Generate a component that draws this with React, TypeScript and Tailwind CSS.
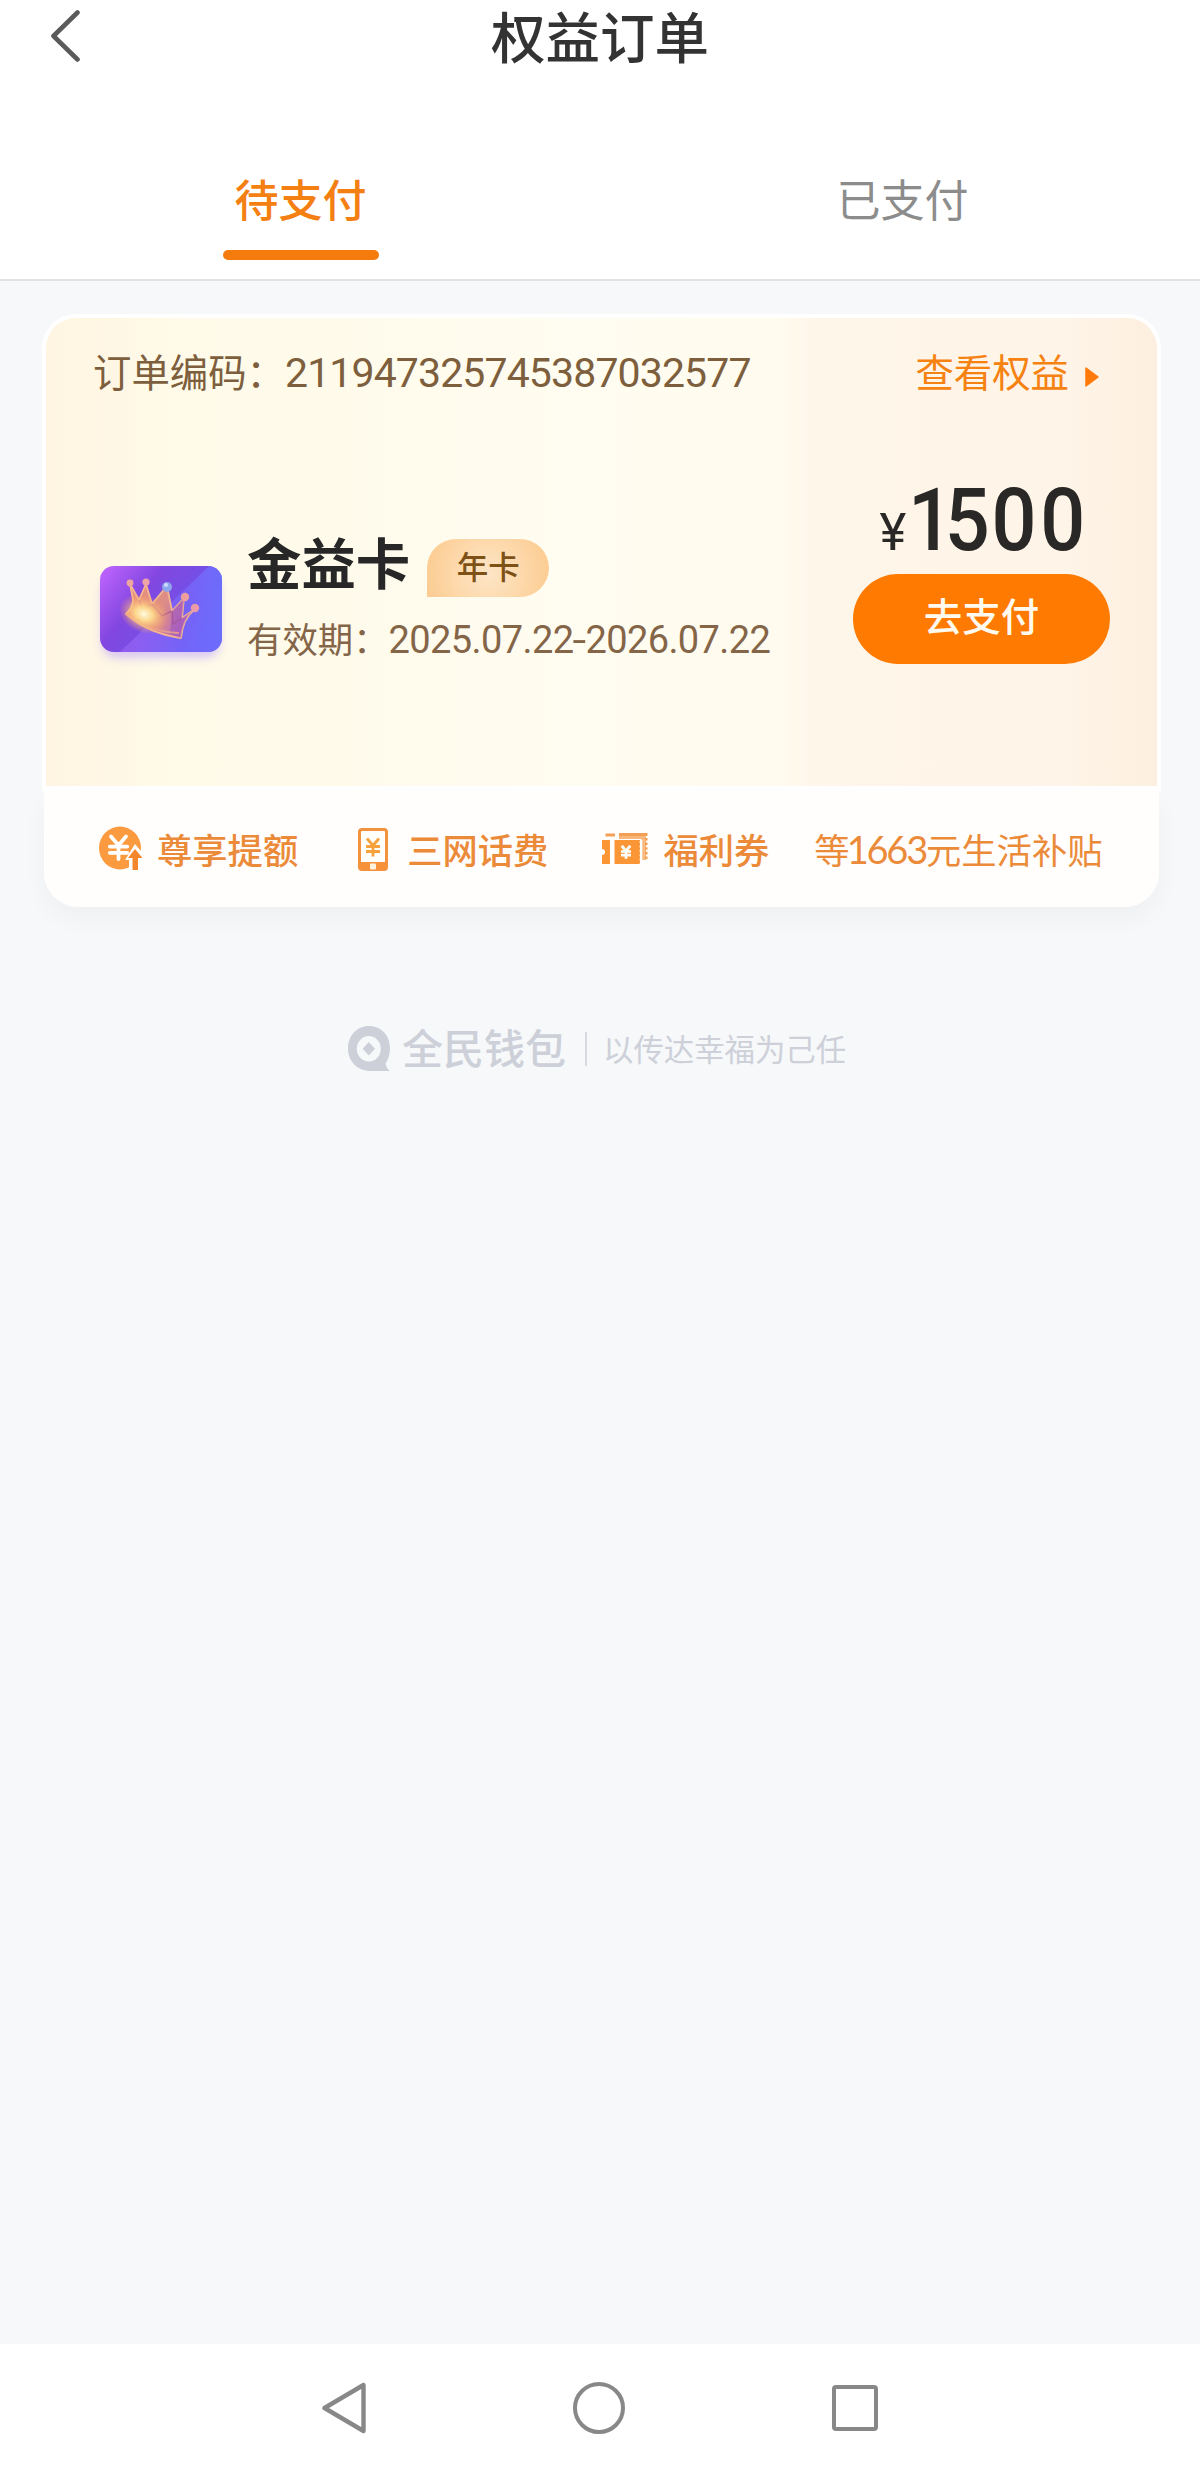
import React, { useState } from 'react';

const TABS = ['待支付', '已支付'];

const YEN_PATH = 'M-6 -8 L0 -1 L6 -8 M-7 0 H7 M-7 5 H7 M0 -1 V10';

function CrownCard() {
  return (
    <svg viewBox="0 0 150 126" className="w-[150px] h-[126px] block">
      <defs>
        <linearGradient id="cardBg" x1="0" y1="0" x2="1" y2="0.55">
          <stop offset="0" stopColor="#c266ff" />
          <stop offset="0.4" stopColor="#8247e0" />
          <stop offset="1" stopColor="#6558ee" />
        </linearGradient>
        <linearGradient id="cardShine" x1="0" y1="0.5" x2="1" y2="0.5">
          <stop offset="0" stopColor="#b878ff" stopOpacity="0.35" />
          <stop offset="0.6" stopColor="#7b6cff" stopOpacity="0.6" />
          <stop offset="1" stopColor="#6d72ff" stopOpacity="0.8" />
        </linearGradient>
        <linearGradient id="crownBody" x1="0" y1="0.4" x2="1" y2="0.7">
          <stop offset="0" stopColor="#e8907c" />
          <stop offset="0.5" stopColor="#dd8d86" />
          <stop offset="1" stopColor="#a75ad8" />
        </linearGradient>
        <radialGradient id="crownGlow" cx="0.5" cy="0.5" r="0.5">
          <stop offset="0" stopColor="#fffbe0" />
          <stop offset="0.35" stopColor="#ffdf8e" stopOpacity="0.9" />
          <stop offset="1" stopColor="#ff9a5c" stopOpacity="0" />
        </radialGradient>
        <clipPath id="cardClip">
          <rect x="14" y="16" width="122" height="86" rx="14" />
        </clipPath>
        <filter id="soft" x="-20%" y="-20%" width="140%" height="160%">
          <feGaussianBlur stdDeviation="5" />
        </filter>
      </defs>
      <rect x="16" y="26" width="118" height="82" rx="14" fill="#a98bff" opacity="0.45" filter="url(#soft)" />
      <g clipPath="url(#cardClip)">
        <rect x="14" y="16" width="122" height="86" fill="url(#cardBg)" />
        <path d="M123 16 H136 V102 H34 Z" fill="url(#cardShine)" />
      </g>
      <path
        d="M40 64 C44 60 47 55 47 50 L44 34 L53 50 L60 34 L66 54 L81 36 L86 61 L98 48 L96 68 L109 59 C100 66 96 76 95 88 C73 85 55 77 40 64 Z"
        fill="url(#crownBody)"
        stroke="#f4b690"
        strokeWidth="1.8"
        strokeLinejoin="round"
      />
      <path d="M86 61 L98 48 L96 68 L109 59 C100 66 96 76 95 88 L84 84 Z" fill="#9a52c4" opacity="0.5" />
      <path d="M53 50 L57 60 L66 54 M86 61 L76 66 L66 54 M86 61 L87 74 L96 68" fill="none" stroke="#a44f8f" strokeWidth="1.4" opacity="0.6" />
      <path d="M40 64 C55 76 73 82 93 83" fill="none" stroke="#e59a90" strokeWidth="2" />
      <circle cx="44" cy="33" r="3.4" fill="#f0a6a0" />
      <circle cx="60" cy="32" r="3.6" fill="#efa5a8" />
      <circle cx="81" cy="37" r="5" fill="#8fa5ec" />
      <circle cx="80" cy="35" r="2" fill="#c9dcff" />
      <circle cx="99" cy="47" r="4.2" fill="#ee9f9d" />
      <circle cx="109" cy="58" r="4.2" fill="#ea9aa8" />
      <ellipse cx="58" cy="64" rx="26" ry="19" fill="url(#crownGlow)" transform="rotate(22 58 64)" />
    </svg>
  );
}

function RaiseIcon() {
  return (
    <svg viewBox="0 0 44 46" className="w-[44px] h-[46px] block">
      <ellipse cx="21" cy="22" rx="21" ry="21.5" fill="#fb9a3e" />
      <path d={YEN_PATH} transform="translate(19.5 20.5) scale(1.25)" fill="none" stroke="#fff" strokeWidth="3" strokeLinecap="round" />
      <path d="M36 18 L47 31 H42 V46 H30 V34 H26 Z" fill="#fff" />
      <path d="M36 23 L43.5 32 H39 V44 H33.5 V32 H29 Z" fill="#f4872b" />
    </svg>
  );
}

function PhoneIcon() {
  return (
    <svg viewBox="0 0 30 43" className="w-[30px] h-[43px] block">
      <rect x="1.5" y="1.5" width="27" height="40" rx="2.5" fill="#fffefa" stroke="#f2923c" strokeWidth="3" />
      <path d="M1.5 34 H28.5 V39 a3 3 0 0 1 -3 3 H4.5 a3 3 0 0 1 -3 -3 Z" fill="#f8923a" />
      <rect x="12" y="35.5" width="6" height="6" rx="1" fill="#fff3df" />
      <path d={YEN_PATH} transform="translate(15 18.5)" fill="none" stroke="#f7a23c" strokeWidth="2.8" />
    </svg>
  );
}

function CouponIcon() {
  return (
    <svg viewBox="0 0 46 32" className="w-[46px] h-[32px] block">
      <path d="M5 3.5 V2 H13 M17 1.5 H44 V27" fill="none" stroke="#f3a055" strokeWidth="3" />
      <path d="M17 4.5 H41 V7" fill="none" stroke="#f9b67c" strokeWidth="3" />
      <path d="M41.500 4 V27" fill="none" stroke="#f9b67c" strokeWidth="2.400" />
      <path d="M45 3 V28" fill="none" stroke="#fffefc" strokeWidth="2.4" strokeDasharray="2 2.6" />
      <path d="M0 7 H8 V31 H0 V22 a3 3 0 0 0 0 -6 Z" fill="#fb9637" />
      <path d="M12.5 7 H38 V31 H12.5 Z" fill="#fb9637" />
      <path d="M38.5 8 V31" stroke="#fff" strokeWidth="1.8" strokeDasharray="2 2.4" />
      <path d={YEN_PATH} transform="translate(24 18.5) scale(0.72)" fill="none" stroke="#fff" strokeWidth="3.8" />
    </svg>
  );
}

function WalletLogo() {
  return (
    <svg viewBox="0 0 42 46" className="w-[42px] h-[46px] block">
      <path
        d="M21 0 C33 0 42 9.5 42 22 C42 28 40.5 33 37.5 37.5 C38.2 41 39.7 43.5 42 45 L23 45 C9 45 0 35 0 22.5 C0 9.5 9 0 21 0 Z"
        fill="#cdd0d8"
      />
      <ellipse cx="20.8" cy="22.7" rx="12" ry="12.8" fill="#f6f8fa" />
      <path d="M20.8 16 L27 22.7 L20.8 29.4 L14.6 22.7 Z" fill="#cdd0d8" />
    </svg>
  );
}

function OrderCard() {
  return (
    <div className="mx-[42px] mt-[33px] w-[1119px]">
      <div className="h-[477px] rounded-t-[34px] border-[4px] border-b-[5px] border-white bg-[linear-gradient(90deg,#fff5e2_0%,#fff7e5_7%,#fffae8_10%,#fffbec_30%,#fffcf1_48%,#fffbee_66%,#fff6ea_69%,#fef4e7_92%,#fdefdf_100%)]">
        <div className="flex h-[110px] items-start justify-between pl-[47px] pr-[58px] text-[38.4px]">
          <div className="flex text-[#7d5f3d]">
            <span className="leading-[105px]">订单编码：</span>
            <span className="font-['Roboto'] text-[41px] leading-[110px] tracking-[-0.87px]">211947325745387032577</span>
          </div>
          <div className="flex items-center leading-[105px] text-[#f58211]">
            <span>查看权益</span>
            <svg viewBox="0 0 14 20" className="mt-[13px] ml-[16px] h-[20px] w-[14px]">
              <path d="M1 1 L13 10 L1 19 Z" fill="#ff7a0a" stroke="#ff7a0a" strokeWidth="1.5" strokeLinejoin="round" />
            </svg>
          </div>
        </div>

        <div className="flex justify-between pl-[40px] pr-[47px]">
          <div className="flex pt-[111px]">
            <div className="pt-[11px]">
              <CrownCard />
            </div>
            <div className="ml-[11px]">
              <div className="flex h-[58px] items-start">
                <span className="-mt-[7px] text-[54.4px] font-bold leading-[58px] text-[#272727]">金益卡</span>
                <span className="ml-[17px] h-[58px] w-[122px] rounded-[29px] rounded-bl-none bg-[radial-gradient(circle_at_50%_60%,#fde5c6_0%,#fddbb0_40%,#fcc98c_100%)] text-center text-[31.5px] font-medium leading-[52px] text-[#7e5217]">
                  年卡
                </span>
              </div>
              <div className="mt-[11px] flex h-[60px] items-start text-[35.4px] leading-[60px] text-[#846548]">
                <span>有效期：</span>
                <span className="font-['Roboto'] text-[38px] leading-[65px] tracking-[-0.6px]">
                  2025.07.22<span className="mx-[1px] inline-block scale-x-130">-</span>2026.07.22
                </span>
              </div>
            </div>
          </div>

          <div className="flex flex-col items-center pt-[43px]">
            <div className="flex h-[103px] w-[257px] items-baseline justify-end pr-[21px] font-['Roboto'] leading-[98px] text-[#2a2826]">
              <span className="-mr-[16px] text-[51px]">¥</span>
              <span className="origin-right scale-x-91 text-[87px] font-medium tracking-[4px]">
                <span className="tracking-[-9px]">1</span>
                <span className="tracking-[2px]">5</span>00
              </span>
            </div>
            <button className="h-[90px] w-[257px] rounded-full bg-[#ff7a00] pb-[10px] text-[38.5px] font-medium leading-[80px] text-[#fffaf0]">
              去支付
            </button>
          </div>
        </div>
      </div>

      <div className="mx-[2px] flex h-[116px] items-center rounded-b-[34px] bg-[#fffefd] pl-[55px] text-[35.3px] font-medium leading-[60px] text-[#eb8b3a] shadow-[0_12px_24px_rgba(0,0,0,0.035)]">
        <RaiseIcon />
        <span className="ml-[14px]">尊享提额</span>
        <span className="ml-[60px]"><PhoneIcon /></span>
        <span className="ml-[19px]">三网话费</span>
        <span className="ml-[54px]"><CouponIcon /></span>
        <span className="ml-[15px]">福利券</span>
        <span className="ml-[45px] font-normal">
          等<span className="-ml-[3px] font-['Lato'] text-[38px] tracking-[-2.2px]">1663</span>元生活补贴
        </span>
      </div>
    </div>
  );
}

export default function App() {
  const [activeTab, setActiveTab] = useState(0);

  return (
    <div className="flex h-[2472px] w-[1200px] flex-col overflow-hidden bg-[#f6f8fa] font-['Noto_Sans_CJK_SC',sans-serif]">
      <header className="border-b-[2px] border-[#e2e2e2] bg-white">
        <div className="grid h-[74px] grid-cols-3 items-start">
          <svg viewBox="0 0 30 52" className="mt-[10px] ml-[50px] h-[52px] w-[30px]">
            <path d="M27.5 2.5 L3.5 26 L27.5 49.5" fill="none" stroke="#5a5a5a" strokeWidth="4.6" strokeLinecap="round" strokeLinejoin="round" />
          </svg>
          <h1 className="text-center text-[54.5px] font-medium leading-[69px] text-[#333]">权益订单</h1>
        </div>
        <div className="mt-[72px] grid h-[133px] grid-cols-2">
          {TABS.map((tab, i) => (
            <button key={tab} onClick={() => setActiveTab(i)} className="flex flex-col items-center pt-[22px] pl-[1px]">
              <span
                className={`text-[44px] leading-[60px] ${
                  i === activeTab ? 'font-medium text-[#f47f12]' : 'pl-[4px] text-[#8c8c8c]'
                }`}
              >
                {tab}
              </span>
              {i === activeTab && <span className="mt-[22px] h-[10px] w-[156px] rounded-full bg-[#f57c0c]" />}
            </button>
          ))}
        </div>
      </header>

      <main className="flex-1">
        <OrderCard />
        <div className="mt-[119px] flex h-[46px] items-center pl-[348px] text-[#cdd0d8]">
          <WalletLogo />
          <span className="-mt-[6px] ml-[12px] text-[41px] font-medium leading-[42px]">全民钱包</span>
          <span className="ml-[19px] h-[34px] w-[2px] bg-[#d6d9df]" />
          <span className="-mt-[2px] ml-[16px] text-[30.4px] leading-[46px]">以传达幸福为己任</span>
        </div>
      </main>

      <nav className="grid h-[128px] grid-cols-[322px_44px_207px_52px_207px_48px] items-center bg-white">
        <svg viewBox="0 0 44 52" className="col-start-2 h-[52px] w-[44px]">
          <path d="M41.5 3 V49 L2.5 26 Z" fill="none" stroke="#888" strokeWidth="4.4" strokeLinejoin="round" />
        </svg>
        <span className="col-start-4 h-[52px] w-[52px] rounded-full border-[4px] border-[#888]" />
        <span className="col-start-6 h-[46px] w-[46px] rounded-[4px] border-[4px] border-[#888]" />
      </nav>
    </div>
  );
}
